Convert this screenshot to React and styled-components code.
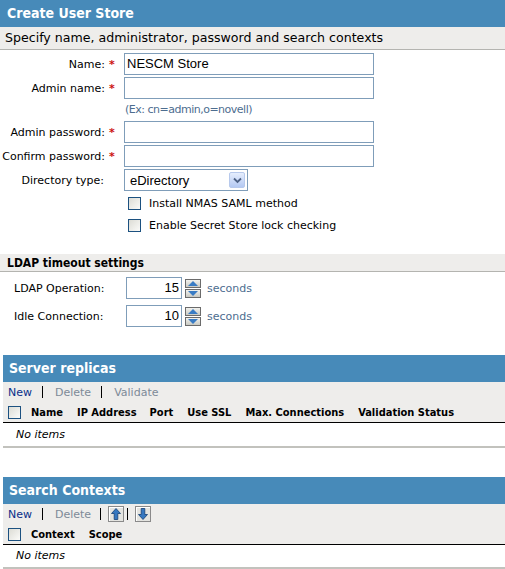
import React from "react";
import styled, { createGlobalStyle } from "styled-components";

const colors = {
  blue: "#478ab9",
  bar: "#eeedeb",
  barLine: "#b4b4b0",
  inputBorder: "#7f9db9",
  hint: "#4d6d8f",
  link: "#0b2f8a",
  disabled: "#7d8a98",
  required: "#cc1111",
  text: "#000",
};

const bold = `"DejaVu Sans Condensed", "DejaVu Sans", Verdana, sans-serif`;

const GlobalStyle = createGlobalStyle`
  body {
    margin: 0;
    background: #fff;
    font-family: "DejaVu Sans", Verdana, sans-serif;
    font-size: 11px;
    color: ${colors.text};
  }
`;

const Page = styled.div`
  width: 505px;
  display: flex;
  flex-direction: column;
`;

const TitleBar = styled.div`
  background: ${colors.blue};
  color: #fff;
  font-family: ${bold};
  font-weight: bold;
  font-size: 14px;
  height: 27px;
  line-height: 27px;
  padding-left: ${({ $inset }) => ($inset ? "6px" : "7px")};
`;

const SubBar = styled.div`
  background: ${colors.bar};
  border-bottom: 1px solid ${colors.barLine};
  height: 22px;
  line-height: 22px;
  padding-left: 5px;
  font-size: 12.6px;
`;

const Form = styled.div`
  display: grid;
  grid-template-columns: 124px 1fr;
  row-gap: 2px;
  padding-top: 3px;
  align-items: center;
`;

const Label = styled.div`
  display: flex;
  justify-content: flex-end;
  align-items: center;
  padding-right: ${({ $req }) => ($req ? "9px" : "20px")};
  white-space: nowrap;
  height: 22px;
`;

const Star = styled.span`
  color: ${colors.required};
  font-weight: bold;
  margin-left: 4px;
  width: 6px;
`;

const TextInput = styled.div`
  box-sizing: border-box;
  width: ${({ $w }) => $w || 250}px;
  height: 22px;
  border: 1px solid ${colors.inputBorder};
  font-family: "Liberation Sans", Arial, sans-serif;
  font-size: 13px;
  line-height: 20px;
  padding: 0 2px;
  text-align: ${({ $right }) => ($right ? "right" : "left")};
  background: #fff;
`;

const Hint = styled.div`
  grid-column: 2;
  color: ${colors.hint};
  letter-spacing: -0.5px;
  padding: 2px 0 1px 1px;
  height: 15px;
`;

const Select = styled.div`
  box-sizing: border-box;
  width: 124px;
  height: 22px;
  border: 1px solid ${colors.inputBorder};
  display: flex;
  align-items: center;
  justify-content: space-between;
  padding: 0 2px 0 5px;
  font-family: "Liberation Sans", Arial, sans-serif;
  font-size: 13px;
`;

const DropButton = styled.div`
  box-sizing: border-box;
  width: 16px;
  height: 16px;
  border: 1px solid #b7c9ec;
  border-radius: 2px;
  background: linear-gradient(#e6eefd, #b4c9f3);
  display: flex;
  align-items: center;
  justify-content: center;
`;

const CheckRows = styled.div`
  grid-column: 2;
  display: flex;
  flex-direction: column;
  gap: 9px;
  padding: 4px 0 0 4px;
`;

const CheckLine = styled.label`
  display: flex;
  align-items: center;
  gap: 8px;
  height: 13px;
`;

const Box = styled.span`
  box-sizing: border-box;
  width: 13px;
  height: 13px;
  border: 1px solid #1c5180;
  background: linear-gradient(135deg, #dcdcd5, #fbfbf9);
  flex: none;
`;

const SectionBar = styled.div`
  margin-top: ${({ $top }) => $top}px;
  background: ${colors.bar};
  border-bottom: 1px solid ${colors.barLine};
  height: 17px;
  line-height: 18px;
  padding-left: 7px;
  font-family: ${bold};
  font-weight: bold;
  font-size: 12px;
`;

const TimeoutRows = styled.div`
  display: flex;
  flex-direction: column;
  gap: 6px;
  padding: 5px 0 0 14px;
`;

const TimeoutRow = styled.div`
  display: flex;
  align-items: center;
  height: 22px;
`;

const TimeoutLabel = styled.div`
  width: 112px;
`;

const Spinner = styled.div`
  display: flex;
  flex-direction: column;
  gap: 1px;
  margin: 0 6px 0 3px;
`;

const SpinButton = styled.div`
  box-sizing: border-box;
  width: 16px;
  height: 9px;
  border: 1px solid #6b6b6b;
  background: linear-gradient(#f2f2ee, #c9c9c2);
  display: flex;
  align-items: center;
  justify-content: center;
`;

const Unit = styled.span`
  color: ${colors.hint};
`;

const Panel = styled.div`
  margin-left: 3px;
  margin-top: ${({ $top }) => $top}px;
`;

const Toolbar = styled.div`
  background: ${colors.bar};
  height: 20px;
  display: flex;
  align-items: center;
  padding-left: 5px;
`;

const Action = styled.span`
  color: ${({ $off }) => ($off ? colors.disabled : colors.link)};
`;

const Sep = styled.span`
  display: inline-block;
  width: 1px;
  height: 12px;
  background: #000;
  margin: ${({ $m }) => $m || "0 12px 0 10px"};
`;

const IconButton = styled.span`
  box-sizing: border-box;
  width: 16px;
  height: 16px;
  border: 1px solid #8a8a8a;
  box-shadow: inset 1px 1px 0 #fff;
  background: #e4e4e0;
  display: inline-flex;
  align-items: center;
  justify-content: center;
`;

const HeadRow = styled.div`
  background: ${colors.bar};
  height: 20px;
  border-bottom: 1px solid #000;
  display: flex;
  align-items: center;
  padding-left: 5px;
  font-family: ${bold};
  font-weight: bold;
`;

const HeadCell = styled.span`
  margin-left: ${({ $gap }) => $gap}px;
  white-space: nowrap;
`;

const Empty = styled.div`
  height: ${({ $h }) => $h}px;
  line-height: ${({ $h }) => $h}px;
  padding-left: 13px;
  font-style: italic;
  border-bottom: 2px solid #c2c2bd;
`;

const Chevron = () => (
  <svg width="9" height="7" viewBox="0 0 9 7">
    <path d="M1 1.5 L4.5 5 L8 1.5" fill="none" stroke="#4d6185" strokeWidth="1.8" />
  </svg>
);

const Tri = ({ up }) => (
  <svg width="10" height="5" viewBox="0 0 10 5">
    <path d={up ? "M0 5 L5 0 L10 5 Z" : "M0 0 L5 5 L10 0 Z"} fill="#3a7cc4" />
  </svg>
);

const Arrow = ({ up }) => (
  <svg width="10" height="12" viewBox="0 0 10 12">
    <g transform={up ? "" : "rotate(180 5 6)"}>
      <path
        d="M5 0.5 L9.5 5.5 L6.8 5.5 L6.8 11.5 L3.2 11.5 L3.2 5.5 L0.5 5.5 Z"
        fill="#3577c0"
        stroke="#143f73"
        strokeWidth="0.8"
      />
    </g>
  </svg>
);

const fields = [
  { label: "Name:", value: "NESCM Store" },
  { label: "Admin name:", value: "", hint: "(Ex: cn=admin,o=novell)" },
  { label: "Admin password:", value: "" },
  { label: "Confirm password:", value: "" },
];

const timeouts = [
  { label: "LDAP Operation:", value: 15 },
  { label: "Idle Connection:", value: 10 },
];

const replicaColumns = [
  ["Name", 10],
  ["IP Address", 14],
  ["Port", 13],
  ["Use SSL", 14],
  ["Max. Connections", 14],
  ["Validation Status", 14],
];

const App = () => (
  <Page>
    <GlobalStyle />
    <TitleBar>Create User Store</TitleBar>
    <SubBar>Specify name, administrator, password and search contexts</SubBar>
    <Form>
      {fields.map((f) => (
        <React.Fragment key={f.label}>
          <Label $req>
            {f.label}
            <Star>*</Star>
          </Label>
          <TextInput>{f.value}</TextInput>
          {f.hint && <Hint>{f.hint}</Hint>}
        </React.Fragment>
      ))}
      <Label>Directory type:</Label>
      <Select>
        eDirectory
        <DropButton>
          <Chevron />
        </DropButton>
      </Select>
      <CheckRows>
        <CheckLine>
          <Box />
          Install NMAS SAML method
        </CheckLine>
        <CheckLine>
          <Box />
          Enable Secret Store lock checking
        </CheckLine>
      </CheckRows>
    </Form>

    <SectionBar $top={22}>LDAP timeout settings</SectionBar>
    <TimeoutRows>
      {timeouts.map((t) => (
        <TimeoutRow key={t.label}>
          <TimeoutLabel>{t.label}</TimeoutLabel>
          <TextInput $w={56} $right>
            {t.value}
          </TextInput>
          <Spinner>
            <SpinButton>
              <Tri up />
            </SpinButton>
            <SpinButton>
              <Tri />
            </SpinButton>
          </Spinner>
          <Unit>seconds</Unit>
        </TimeoutRow>
      ))}
    </TimeoutRows>

    <Panel $top={28}>
      <TitleBar $inset>Server replicas</TitleBar>
      <Toolbar>
        <Action>New</Action>
        <Sep />
        <Action $off>Delete</Action>
        <Sep />
        <Action $off>Validate</Action>
      </Toolbar>
      <HeadRow>
        <Box />
        {replicaColumns.map(([c, g]) => (
          <HeadCell key={c} $gap={g}>
            {c}
          </HeadCell>
        ))}
      </HeadRow>
      <Empty $h={23}>No items</Empty>
    </Panel>

    <Panel $top={29}>
      <TitleBar $inset>Search Contexts</TitleBar>
      <Toolbar>
        <Action>New</Action>
        <Sep />
        <Action $off>Delete</Action>
        <Sep $m="0 7px 0 9px" />
        <IconButton>
          <Arrow up />
        </IconButton>
        <Sep $m="0 7px 0 3px" />
        <IconButton>
          <Arrow />
        </IconButton>
      </Toolbar>
      <HeadRow>
        <Box />
        <HeadCell $gap={10}>Context</HeadCell>
        <HeadCell $gap={14}>Scope</HeadCell>
      </HeadRow>
      <Empty $h={22}>No items</Empty>
    </Panel>
  </Page>
);

export default App;
